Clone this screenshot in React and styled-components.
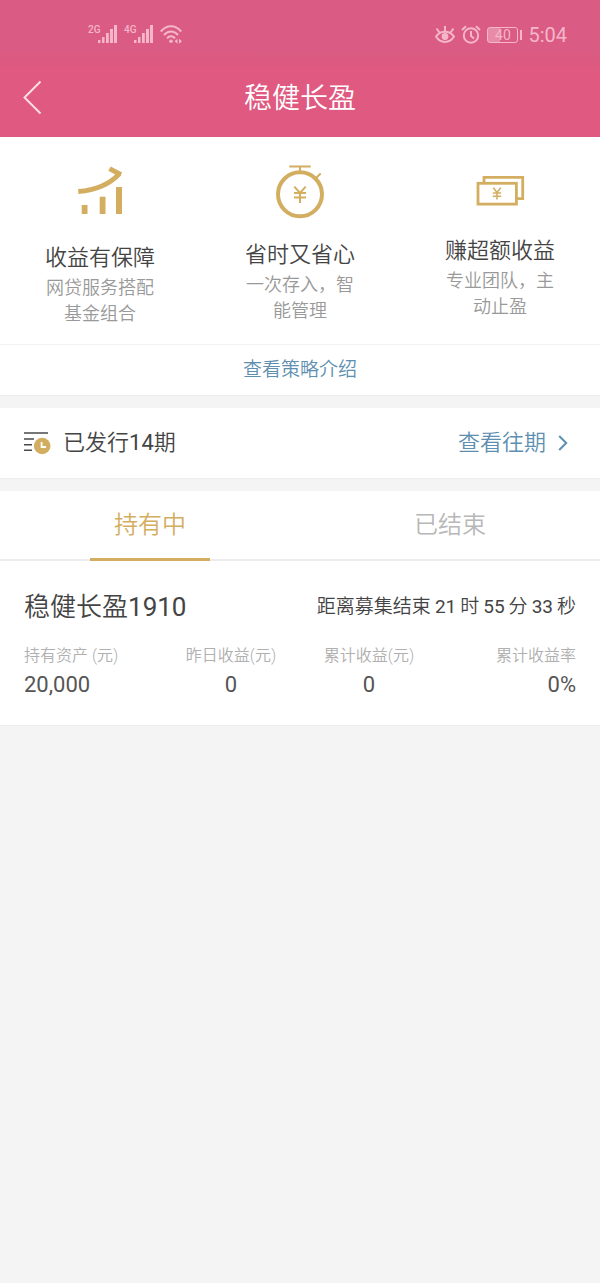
import React, { useState } from "react";
import styled, { createGlobalStyle } from "styled-components";

const features = [
  {
    key: "safe",
    icon: "growth",
    gap: 20,
    title: "收益有保障",
    lines: ["网贷服务搭配", "基金组合"],
  },
  {
    key: "easy",
    icon: "watch",
    gap: 17,
    title: "省时又省心",
    lines: ["一次存入，智", "能管理"],
  },
  {
    key: "extra",
    icon: "notes",
    gap: 13,
    title: "赚超额收益",
    lines: ["专业团队，主", "动止盈"],
  },
];

const tabs = ["持有中", "已结束"];

const stats = [
  { label: "持有资产 (元)", value: "20,000", align: "left" },
  { label: "昨日收益(元)", value: "0", align: "center" },
  { label: "累计收益(元)", value: "0", align: "center" },
  { label: "累计收益率", value: "0%", align: "right" },
];

const SignalIcon = () => (
  <svg width="20" height="20" viewBox="0 0 20 20" fill="currentColor">
    <rect x="0" y="15" width="2.5" height="3" />
    <rect x="4" y="12" width="2.5" height="6" />
    <rect x="8" y="8" width="2.8" height="10" />
    <rect x="12" y="4" width="3" height="14" />
    <rect x="16" y="0" width="3" height="18" />
  </svg>
);

const WifiIcon = () => (
  <svg width="22" height="20" viewBox="0 0 22 20" fill="none" stroke="currentColor" strokeWidth="2">
    <path d="M.8 6.5C6.5-.6 15.5-.6 21.2 6.5" />
    <path d="M4 10C8 5.2 14 5.2 18 10" />
    <path d="M7 13.3C9.2 10.6 12.8 10.6 15 13.3" />
    <circle cx="11" cy="16.2" r="1.8" fill="currentColor" stroke="none" />
    <path d="M17.5 13.7L14.5 16.2L17.5 18.7ZM19 13.7L22 16.2L19 18.7Z" fill="currentColor" stroke="none" />
  </svg>
);

const EyeIcon = () => (
  <svg width="20" height="20" viewBox="0 0 20 20" fill="none" stroke="currentColor" strokeWidth="2">
    <path d="M1 11.5C5.5 5 14.5 5 19 11.5C14.5 18.7 5.5 18.7 1 11.5Z" />
    <path d="M10 1V6M1.5 3.5L4.5 7.5M18.5 3.5L15.5 7.5" />
    <circle cx="10" cy="11.5" r="3.4" fill="currentColor" stroke="none" />
  </svg>
);

const AlarmIcon = () => (
  <svg width="20" height="20" viewBox="0 0 20 20" fill="none" stroke="currentColor" strokeWidth="2">
    <circle cx="10" cy="10.5" r="7.2" />
    <path d="M10 6V11L13 13.5M1 5L5 1.2M19 5L15 1.2" />
  </svg>
);

const BackIcon = () => (
  <svg width="20" height="38" viewBox="0 0 20 38" fill="none" stroke="currentColor" strokeWidth="2">
    <path d="M17.5 1.5L1.5 17.5L17.5 33.5" />
  </svg>
);

const GrowthIcon = () => (
  <svg width="60" height="60" viewBox="0 0 60 60" fill="currentColor">
    <rect x="11.7" y="44" width="5.8" height="9" />
    <rect x="29.7" y="35.7" width="5.8" height="17.3" />
    <rect x="46" y="26" width="6" height="27" />
    <path
      d="M8.3 30.6C25 29.2 39 24 49.5 12.6M39.5 7.6L51 13.8"
      fill="none"
      stroke="currentColor"
      strokeWidth="5"
    />
  </svg>
);

const WatchIcon = () => (
  <svg width="60" height="60" viewBox="0 0 60 60" fill="none" stroke="currentColor" strokeWidth="2">
    <circle cx="30" cy="33.3" r="22" strokeWidth="4" />
    <path d="M19.3 5.5H40.7M30 5.5V11M50.7 12.5L45 18" />
    <path d="M24.3 25.7L30 32L35.7 25.7M30 32V42M24 32H36M24 36.6H36" />
  </svg>
);

const NotesIcon = () => (
  <svg width="60" height="60" viewBox="0 0 60 60" fill="none" stroke="currentColor" strokeWidth="2.8">
    <rect x="8" y="22.3" width="38.4" height="20.8" />
    <path d="M14 22V16.3H52.7V37.7H47" />
    <path d="M23.3 26.7L27 31.5L30.7 26.7M27 31.5V38.5M22.8 32H31.2M22.8 35.2H31.2" strokeWidth="1.6" />
  </svg>
);

const ListClockIcon = () => (
  <svg width="28" height="24" viewBox="0 0 28 24" fill="none">
    <path d="M0 2H24M0 8H10M0 13.7H8M0 19.3H8" stroke="#4a4a4a" strokeWidth="1.6" />
    <circle cx="18.2" cy="15" r="8.3" fill="#d3ae60" />
    <path d="M17.6 11V16H22" stroke="#fff" strokeWidth="1.8" />
  </svg>
);

const NextIcon = () => (
  <svg width="10" height="18" viewBox="0 0 10 18" fill="none" stroke="currentColor" strokeWidth="2">
    <path d="M1.2 2L8.2 9L1.2 16" />
  </svg>
);

const icons = { growth: GrowthIcon, watch: WatchIcon, notes: NotesIcon };

const App = () => {
  const [active, setActive] = useState(0);

  return (
    <Page>
      <GlobalStyle />

      <TopBar>
        <StatusBar>
          <StatusGroup>
            <Signal>
              <Network>2G</Network>
              <SignalIcon />
            </Signal>
            <Signal>
              <Network>4G</Network>
              <SignalIcon />
            </Signal>
            <WifiIcon />
          </StatusGroup>
          <StatusGroup>
            <EyeIcon />
            <AlarmIcon />
            <Battery>40</Battery>
            <Clock>5:04</Clock>
          </StatusGroup>
        </StatusBar>
        <NavBar>
          <BackButton aria-label="返回">
            <BackIcon />
          </BackButton>
          <NavTitle>稳健长盈</NavTitle>
        </NavBar>
      </TopBar>

      <Section>
        <FeatureList>
          {features.map((feature) => {
            const Icon = icons[feature.icon];
            return (
              <Feature key={feature.key}>
                <FeatureIcon $gap={feature.gap}>
                  <Icon />
                </FeatureIcon>
                <FeatureTitle>{feature.title}</FeatureTitle>
                {feature.lines.map((line) => (
                  <FeatureText key={line}>{line}</FeatureText>
                ))}
              </Feature>
            );
          })}
        </FeatureList>
        <StrategyLink href="#strategy">查看策略介绍</StrategyLink>
      </Section>

      <Section>
        <IssuedRow>
          <ListClockIcon />
          <IssuedText>
            已发行<Digits>14</Digits>期
          </IssuedText>
          <HistoryLink href="#history">
            <span>查看往期</span>
            <NextIcon />
          </HistoryLink>
        </IssuedRow>
      </Section>

      <Section>
        <TabBar role="tablist">
          {tabs.map((tab, index) => (
            <Tab
              key={tab}
              role="tab"
              aria-selected={index === active}
              $active={index === active}
              onClick={() => setActive(index)}
            >
              {tab}
            </Tab>
          ))}
        </TabBar>
        <Product>
          <ProductTop>
            <ProductName>
              稳健长盈<Digits>1910</Digits>
            </ProductName>
            <Countdown>
              距离募集结束<Num>21</Num>时<Num>55</Num>分<Num>33</Num>秒
            </Countdown>
          </ProductTop>
          <StatTable>
            <thead>
              <tr>
                {stats.map((stat) => (
                  <StatLabel key={stat.label} $align={stat.align}>
                    {stat.label}
                  </StatLabel>
                ))}
              </tr>
            </thead>
            <tbody>
              <tr>
                {stats.map((stat) => (
                  <StatValue key={stat.label} $align={stat.align}>
                    {stat.value}
                  </StatValue>
                ))}
              </tr>
            </tbody>
          </StatTable>
        </Product>
      </Section>
    </Page>
  );
};

export default App;

const GlobalStyle = createGlobalStyle`
  * {
    box-sizing: border-box;
  }
  body {
    margin: 0;
    background-color: #f4f4f4;
    font-family: Roboto, "Noto Sans CJK SC", sans-serif;
    font-weight: 350;
    color: #444;
  }
  button {
    padding: 0;
    border: none;
    background: none;
    font: inherit;
    cursor: pointer;
  }
  a {
    color: #5e8fb0;
    text-decoration: none;
  }
  svg {
    display: block;
    flex-shrink: 0;
  }
`;

const Page = styled.div`
  display: flex;
  flex-direction: column;
  gap: 12px;
  width: 100%;
  min-height: 100vh;
`;

const TopBar = styled.header`
  margin-bottom: -12px;
  background: linear-gradient(#da5b83 0, #da5b83 52px, #df5980 68px);
  color: #fff;
`;

const StatusBar = styled.div`
  display: flex;
  justify-content: space-between;
  align-items: center;
  height: 60px;
  padding: 10px 33px 0 88px;
  color: #f5b6ca;
`;

const StatusGroup = styled.div`
  display: flex;
  align-items: center;
  gap: 6px;
`;

const Signal = styled.div`
  display: flex;
  align-items: flex-start;
`;

const Network = styled.span`
  width: 10px;
  font-size: 10px;
  font-weight: 500;
  line-height: 9px;
`;

const Battery = styled.span`
  position: relative;
  width: 31px;
  height: 16px;
  margin-right: 4px;
  border: 1px solid currentColor;
  border-radius: 3px;
  background: linear-gradient(90deg, #e88ba8 40%, transparent 40%);
  font-size: 14px;
  font-weight: 400;
  line-height: 15px;
  text-align: center;

  &::after {
    content: "";
    position: absolute;
    top: 2px;
    right: -5px;
    width: 2px;
    height: 10px;
    background-color: currentColor;
  }
`;

const Clock = styled.span`
  font-size: 20px;
  font-weight: 400;
  line-height: 20px;
`;

const NavBar = styled.div`
  display: grid;
  grid-template-columns: 60px 1fr 60px;
  align-items: center;
  height: 77px;
`;

const BackButton = styled.button`
  padding-left: 23px;
  color: #fbdde6;
`;

const NavTitle = styled.h1`
  margin: 0;
  font-size: 28px;
  font-weight: 350;
  line-height: 40px;
  text-align: center;
`;

const Section = styled.section`
  background-color: #fff;
  border-bottom: 1px solid #ececec;
`;

const FeatureList = styled.div`
  display: grid;
  grid-template-columns: repeat(3, 1fr);
  padding: 24px 0 17px;
  border-bottom: 1px solid #f2f2f2;
`;

const Feature = styled.div`
  display: flex;
  flex-direction: column;
  align-items: center;
`;

const FeatureIcon = styled.div`
  margin-bottom: ${({ $gap }) => $gap}px;
  color: #d3ae60;
`;

const FeatureTitle = styled.h2`
  margin: 0;
  font-size: 22px;
  font-weight: 350;
  line-height: 34px;
`;

const FeatureText = styled.span`
  font-size: 18px;
  line-height: 26px;
  color: #999;
`;

const StrategyLink = styled.a`
  display: block;
  font-size: 19px;
  line-height: 50px;
  text-align: center;
`;

const IssuedRow = styled.div`
  display: flex;
  align-items: center;
  height: 70px;
  padding: 0 32px 0 24px;
  font-size: 22px;
  line-height: 32px;
`;

const IssuedText = styled.span`
  flex: 1;
  margin-left: 11px;
`;

const HistoryLink = styled.a`
  display: flex;
  align-items: center;
  gap: 12px;
`;

const Digits = styled.span`
  font-weight: 400;
`;

const TabBar = styled.div`
  display: grid;
  grid-template-columns: 1fr 1fr;
  justify-items: center;
  border-bottom: 2px solid #ededed;
`;

const Tab = styled.button`
  width: 40%;
  height: 70px;
  margin-bottom: -2px;
  border-bottom: 3px solid ${({ $active }) => ($active ? "#d3ae60" : "transparent")};
  font-size: 24px;
  line-height: 32px;
  color: ${({ $active }) => ($active ? "#d3ae60" : "#b8b8b8")};
`;

const Product = styled.div`
  padding: 26px 24px 24px;
`;

const ProductTop = styled.div`
  display: flex;
  justify-content: space-between;
  align-items: center;
  margin-bottom: 16px;
`;

const ProductName = styled.h3`
  margin: 0;
  font-size: 26px;
  font-weight: 350;
  line-height: 40px;
`;

const Countdown = styled.span`
  font-size: 19px;
  line-height: 40px;
`;

const Num = styled(Digits)`
  margin: 0 4px;
`;

const StatTable = styled.table`
  width: 100%;
  table-layout: fixed;
  border-collapse: collapse;
`;

const StatLabel = styled.th`
  padding: 0;
  font-size: 16px;
  font-weight: 350;
  line-height: 26px;
  text-align: ${({ $align }) => $align};
  white-space: nowrap;
  color: #b0b0b0;
`;

const StatValue = styled.td`
  padding: 0;
  font-size: 22px;
  font-weight: 400;
  line-height: 32px;
  text-align: ${({ $align }) => $align};
  color: #555;
`;
